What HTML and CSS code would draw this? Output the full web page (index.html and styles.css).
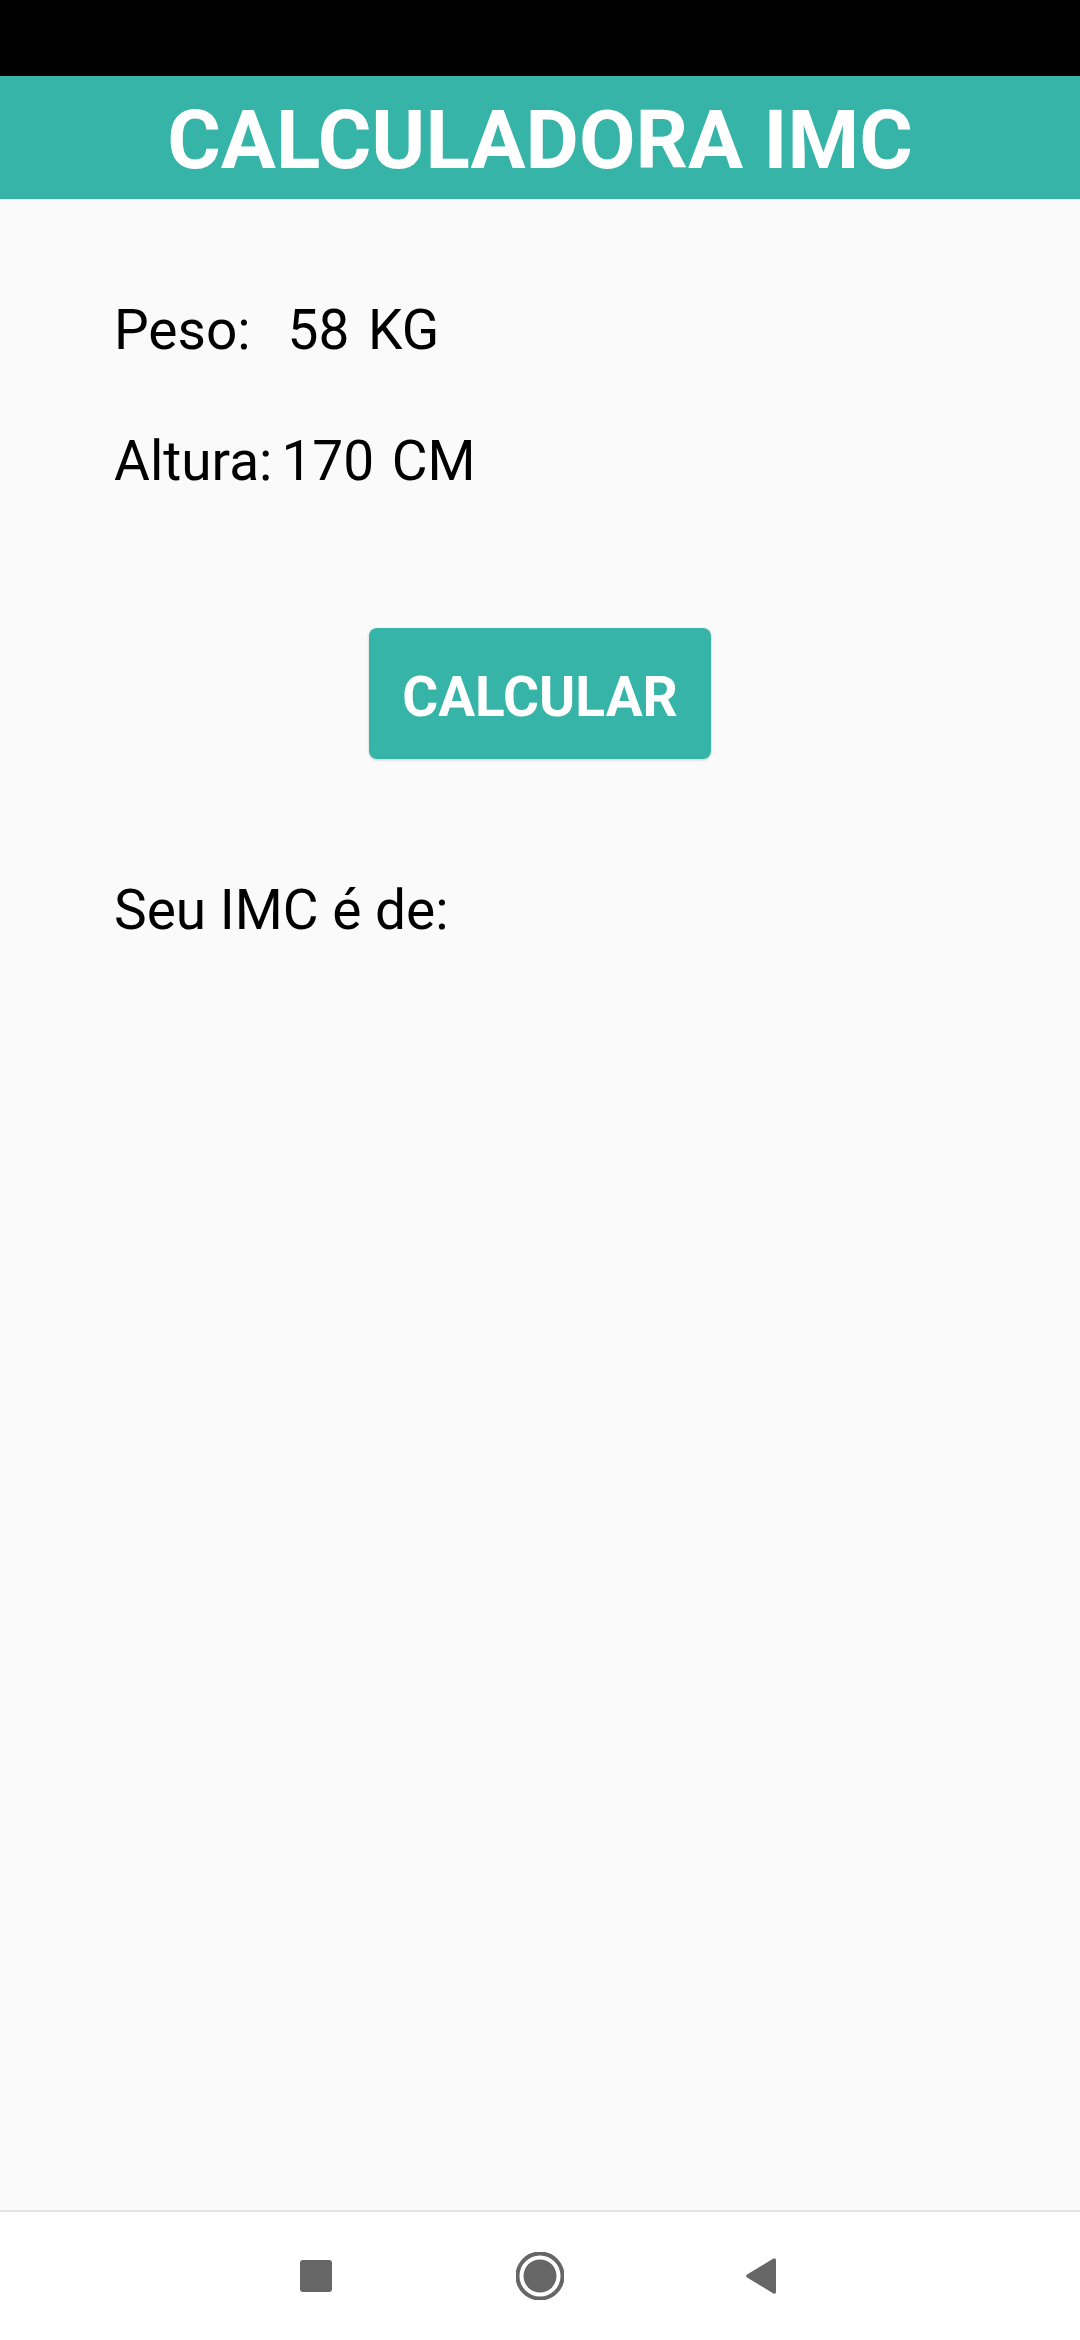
FILE: index.html
```html
<!DOCTYPE html>
<html lang="pt">
<head>
<meta charset="utf-8">
<title>Calculadora IMC</title>
<link rel="stylesheet" href="styles.css">
</head>
<body>
<div class="status-bar"></div>
<header class="app-bar"><h1 class="title">CALCULADORA IMC</h1></header>
<main class="content">
  <div class="row row-peso"><span class="label">Peso:</span><span class="value value-peso">58 KG</span></div>
  <div class="row row-altura"><span class="label">Altura:</span><span class="value value-altura">170 CM</span></div>
  <div class="button-wrap"><button class="btn">CALCULAR</button></div>
  <p class="result">Seu IMC é de:</p>
</main>
<nav class="nav-bar">
  <span class="nav-slot"><svg width="48" height="48" viewBox="0 0 48 48"><rect x="8" y="8" width="32" height="32" rx="3" fill="#666"/></svg></span>
  <span class="nav-slot"><svg width="48" height="48" viewBox="0 0 48 48"><circle cx="24" cy="24" r="22.5" fill="none" stroke="#666" stroke-width="4"/><circle cx="24" cy="24" r="16.5" fill="#666"/></svg></span>
  <span class="nav-slot"><svg width="48" height="48" viewBox="0 0 48 48"><path d="M7.5 22.2 L33 6.8 Q36 5.2 36 8.5 L36 39.5 Q36 42.8 33 41.2 L7.5 25.8 Q4.6 24 7.5 22.2 Z" fill="#666"/></svg></span>
</nav>
</body>
</html>
```

FILE: styles.css
```css
html, body {
  margin: 0;
  padding: 0;
}
body {
  width: 1080px;
  height: 2340px;
  display: flex;
  flex-direction: column;
  background: #fafafa;
  font-family: Roboto, "Noto Sans", sans-serif;
  color: #000;
}
.status-bar {
  height: 76px;
  background: #000;
  flex: none;
}
.app-bar {
  height: 123px;
  flex: none;
  background: #36b4a7;
  box-sizing: border-box;
  padding-top: 5px;
}
.title {
  margin: 0;
  text-align: center;
  color: #fff;
  font-weight: 700;
  font-size: 82px;
  line-height: 118px;
}
.content {
  flex: 1;
  padding: 98px 0 0 114px;
  box-sizing: border-box;
}
.row {
  display: flex;
  font-size: 55px;
  line-height: 66px;
}
.row-altura {
  margin-top: 65px;
}
.value-peso {
  margin-left: 37px;
  word-spacing: 5px;
}
.value-altura {
  margin-left: 9px;
  word-spacing: 4px;
}
.button-wrap {
  display: flex;
  margin-top: 134px;
  padding-left: 255px;
}
.btn {
  width: 342px;
  height: 131px;
  border: none;
  border-radius: 8px;
  background: #36b4a7;
  color: #fff;
  font-family: Roboto, "Noto Sans", sans-serif;
  font-weight: 700;
  font-size: 55px;
  line-height: 123px;
  padding: 8px 0 0;
  box-shadow: 0 1px 3px rgba(0,0,0,0.18);
}
.result {
  margin: 118px 0 0;
  font-size: 55px;
  line-height: 66px;
}
.nav-bar {
  height: 130px;
  flex: none;
  box-sizing: border-box;
  border-top: 2px solid #e2e2e2;
  background: #fff;
  display: flex;
  justify-content: center;
  align-items: center;
  gap: 176px;
}
.nav-slot {
  width: 48px;
  height: 48px;
  display: block;
}
.nav-slot svg {
  display: block;
}
```
